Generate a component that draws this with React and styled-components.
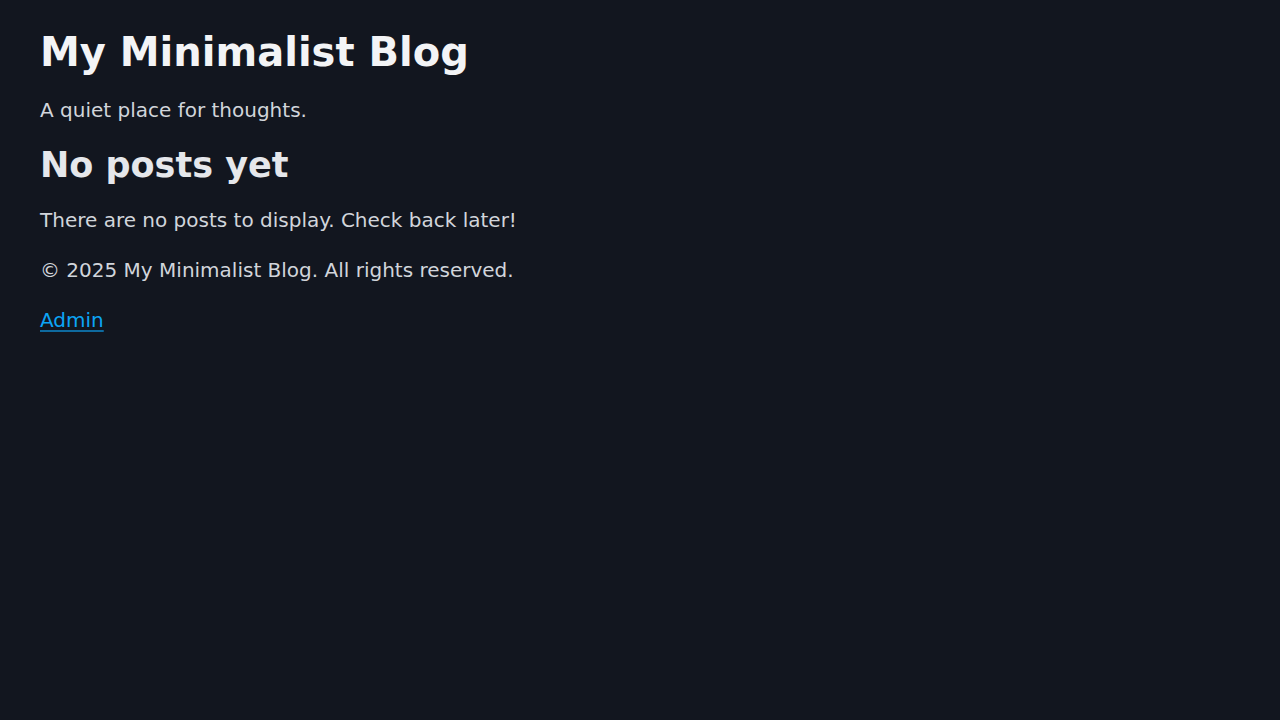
import React from "react";
import styled, { createGlobalStyle } from "styled-components";

const GlobalStyle = createGlobalStyle`
  html, body {
    margin: 0;
    padding: 0;
    background: #12161f;
  }
  body {
    font-family: "DejaVu Sans", sans-serif;
    font-size: 20px;
    color: #d1d5db;
  }
`;

const Page = styled.div`
  min-height: 720px;
  padding: 28px 40px;
  box-sizing: border-box;
  background: #12161f;
`;

const Header = styled.header`
  margin-bottom: 19px;
`;

const Title = styled.h1`
  margin: 0 0 19px;
  font-size: 40px;
  line-height: 1.2;
  font-weight: bold;
  color: #f3f4f6;
`;

const Tagline = styled.p`
  margin: 0;
  font-size: 20px;
  line-height: 1.5;
  color: #d1d5db;
`;

const Heading = styled.h2`
  margin: 0 0 19px;
  font-size: 35px;
  line-height: 1.2;
  font-weight: bold;
  color: #e5e7eb;
`;

const Text = styled.p`
  margin: 0 0 20px;
  font-size: 20px;
  line-height: 1.5;
  color: #d1d5db;
`;

const Footer = styled.footer`
  font-size: 20px;
  line-height: 1.5;
`;

const AdminLink = styled.a`
  color: #0ca4f5;
  text-decoration: underline;
  text-decoration-color: rgba(12, 164, 245, 0.6);
  text-underline-offset: 3px;
`;

export default function App() {
  return (
    <>
      <GlobalStyle />
      <Page>
        <Header>
          <Title>My Minimalist Blog</Title>
          <Tagline>A quiet place for thoughts.</Tagline>
        </Header>
        <main>
          <Heading>No posts yet</Heading>
          <Text>There are no posts to display. Check back later!</Text>
        </main>
        <Footer>
          <Text>© 2025 My Minimalist Blog. All rights reserved.</Text>
          <AdminLink href="#">Admin</AdminLink>
        </Footer>
      </Page>
    </>
  );
}
